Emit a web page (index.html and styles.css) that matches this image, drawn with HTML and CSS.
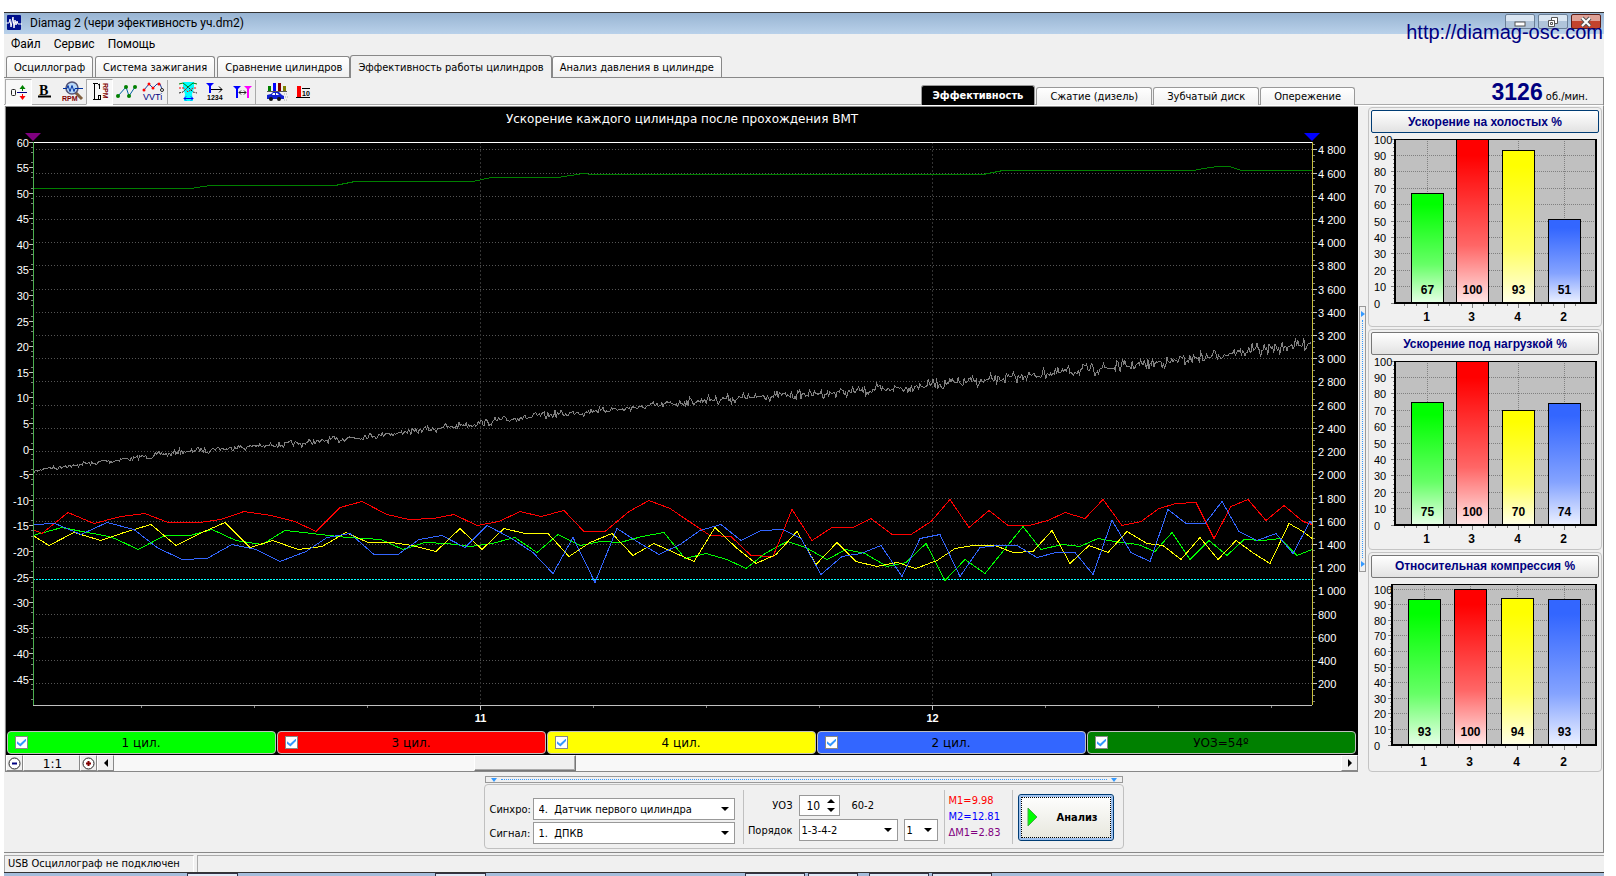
FILE: index.html
```html
<!DOCTYPE html>
<html lang="ru">
<head>
<meta charset="UTF-8">
<meta name="viewport" content="width=device-width, initial-scale=1.0">
<title>Diamag 2</title>
<link rel="stylesheet" href="styles.css">
</head>
<body>
<div class="window">

  <header class="titlebar">
    <svg class="app-icon" width="16" height="16" viewBox="0 0 16 16">
      <rect x="1" width="14" height="15" rx="1" fill="#00108c"/>
      <path d="M0 8h3l1-4 1 8 2-10 1 11 1-8 1 5 1-4 1 3h4" fill="none" stroke="#fff"/>
    </svg>
    <span class="title-text">Diamag 2 (чери эфективность уч.dm2)</span>
    <div class="window-buttons">
      <button type="button" class="win-btn" aria-label="Свернуть"><svg width="12" height="12"><rect x="1" y="6" width="10" height="4" fill="#fff" stroke="#555"/></svg></button>
      <button type="button" class="win-btn" aria-label="Развернуть"><svg width="12" height="12" fill="#fff" stroke="#555"><path d="M4.500 1.500h6v6h-6z"/><path d="M1.500 4.500h6v6h-6z"/><path d="M3.500 6.500h2v2h-2z"/></svg></button>
      <button type="button" class="win-btn win-close" aria-label="Закрыть"><svg width="12" height="12"><path d="M2 2l8 8M10 2l-8 8" stroke="#555" stroke-width="4"/><path d="M2 2l8 8M10 2l-8 8" stroke="#fff" stroke-width="2"/></svg></button>
    </div>
    <a class="site-link" href="http://diamag-osc.com">http://diamag-osc.com</a>
  </header>

  <nav class="menu">
    <button type="button">Файл</button>
    <button type="button">Сервис</button>
    <button type="button">Помощь</button>
  </nav>

  <div class="tabs">
    <button type="button" class="tab">Осциллограф</button>
    <button type="button" class="tab">Система зажигания</button>
    <button type="button" class="tab">Сравнение цилиндров</button>
    <button type="button" class="tab active">Эффективность работы цилиндров</button>
    <button type="button" class="tab">Анализ давления в цилиндре</button>
  </div>

  <div class="toolbar">
    <div class="tools">
      <button type="button" class="tool pressed" aria-label="Ноль">
        <svg viewBox="0 0 24 24"><rect x="4.500" y="9.500" width="4" height="6" rx="1" fill="none" stroke="#222"/><path d="M10 12.500h10" stroke="#000080"/><path d="M15.500 11V7" stroke="green"/><path d="M12.500 9l3-4 3 4z" fill="green"/><path d="M15.500 14v4" stroke="red"/><path d="M12.500 16l3 4 3-4z" fill="red"/></svg>
      </button>
      <button type="button" class="tool" aria-label="Жирный">
        <svg viewBox="0 0 24 24"><text x="5" y="15" class="ico-b">B</text><path d="M4 16.500h13" stroke="#000" stroke-width="2"/></svg>
      </button>
      <button type="button" class="tool" aria-label="Обороты">
        <svg viewBox="0 0 24 24"><path d="M14 12l7 7" stroke="#806040" stroke-width="3"/><circle cx="11" cy="8" r="6" fill="#b8d8f8" stroke="#557" stroke-width="1.500"/><path d="M2 8.500h4l1-3 2 6 2-6 2 6 1-3h8" fill="none" stroke="#0030a0"/><text x="1" y="21" class="ico-s" fill="#800000">RPM</text></svg>
      </button>
      <button type="button" class="tool pressed" aria-label="Шкала оборотов">
        <svg viewBox="0 0 24 24"><path d="M5 3.500h5M6.500 3v17M5 19.500h5" fill="none" stroke="#000"/><path d="M10 5l1.500-1v5" fill="none" stroke="#000"/><rect x="10.500" y="15.500" width="2" height="4" fill="none" stroke="#000"/><text class="ico-s" fill="#800000" transform="translate(14.500 3) rotate(90)">RPM</text></svg>
      </button>
      <button type="button" class="tool" aria-label="Точки">
        <svg viewBox="0 0 24 24"><path d="M3 16l8-9 3 9 6-9" fill="none" stroke="#0060a0"/><g fill="green"><circle cx="3" cy="16" r="2"/><circle cx="11" cy="7" r="2"/><circle cx="14" cy="16" r="2"/><circle cx="20" cy="7" r="2"/></g></svg>
      </button>
      <button type="button" class="tool" aria-label="VVTi">
        <svg viewBox="0 0 24 24"><path d="M2 10l5-6 4 4 4-4 3 0 2 5" fill="none" stroke="#2040a0"/><g fill="red"><circle cx="2" cy="10" r="1.500"/><circle cx="7" cy="4" r="1.500"/><circle cx="11" cy="8" r="1.500"/><circle cx="17" cy="4" r="1.500"/></g><circle cx="20" cy="10" r="1.500" fill="#fff" stroke="#222"/><text x="1" y="20" class="ico-m" fill="#000080">VVTi</text></svg>
      </button>
      <span class="tool-sep"></span>
      <button type="button" class="tool" aria-label="Окно анализа">
        <svg viewBox="0 0 24 24"><path d="M7 2h11v6l-2 6 1 7H8l1-7-2-6z" fill="#0ff"/><path d="M3 4l4-1 5 4 5-4 4 1" fill="none" stroke="green"/><path d="M3 13l4-1 5-5 5 5 4 1" fill="none" stroke="#222" stroke-dasharray="2 1"/><path d="M3 8l5 0 4 4 5-4h4" fill="none" stroke="red" stroke-dasharray="2 1"/><path d="M8 18.500h9M10 16.500l-2 2 2 2M15 16.500l2 2-2 2" fill="none" stroke="#00f"/></svg>
      </button>
      <button type="button" class="tool" aria-label="Порядок цилиндров">
        <svg viewBox="0 0 24 24"><path d="M3 3h8l-4 4z" fill="#00f"/><path d="M7 3v10" stroke="#00f" stroke-width="2"/><path d="M8 9.500h11M16 6.500l3 3-3 3" fill="none" stroke="#000"/><text x="4" y="20" class="ico-s" fill="#000">1234</text></svg>
      </button>
      <button type="button" class="tool" aria-label="Маркеры">
        <svg viewBox="0 0 24 24"><path d="M3 6h8l-4 4z" fill="#00f"/><path d="M7 7v11" stroke="#00f" stroke-width="2"/><path d="M14 6h8l-4 4z" fill="#f0f"/><path d="M18 7v11" stroke="#f0f" stroke-width="2"/><path d="M9 12.500h7M11 10.500l-2 2 2 2M14 10.500l2 2-2 2" fill="none" stroke="#222"/></svg>
      </button>
      <span class="tool-sep"></span>
      <button type="button" class="tool" aria-label="Отчёт">
        <svg viewBox="0 0 24 24"><path d="M4 6h3v5H4z" fill="green"/><path d="M9 3h3v8H9z" fill="#00f"/><path d="M14 3h3v8h-3z" fill="#800000"/><path d="M19 6h3v5h-3z" fill="olive"/><path d="M3 11.500h20" stroke="#555"/><path d="M3 19v-4l4-1 2-2h6l3 3 2 1v3z" fill="#1020d0"/><path d="M9 13h2v2H8zM12 13h1l2 2h-3z" fill="#fff"/><circle cx="7" cy="19" r="2" fill="#111"/><circle cx="15" cy="19" r="2" fill="#111"/><path d="M20 14h4M21 17h3M20 20h4" stroke="#aaa" stroke-dasharray="1 1"/></svg>
      </button>
      <button type="button" class="tool" aria-label="Порог">
        <svg viewBox="0 0 24 24"><path d="M6 6h4v11H6z" fill="red"/><path d="M5 17.500h14M11 8.500h8" stroke="#000"/><text x="11" y="16" class="ico-s" fill="#000">10</text></svg>
      </button>
    </div>
    <div class="modes">
      <button type="button" class="mode active">Эффективность</button>
      <button type="button" class="mode">Сжатие (дизель)</button>
      <button type="button" class="mode">Зубчатый диск</button>
      <button type="button" class="mode">Опережение</button>
    </div>
    <div class="rpm"><b>3126</b> <span>об./мин.</span></div>
  </div>

  <main class="work">
    <section class="scope">
      <h1>Ускорение каждого цилиндра после прохождения ВМТ</h1>
      <div class="plot"><svg id="trend"></svg></div>
      <div class="legend">
        <label class="c-green"><input type="checkbox" checked><span>1 цил.</span></label>
        <label class="c-red"><input type="checkbox" checked><span>3 цил.</span></label>
        <label class="c-yellow"><input type="checkbox" checked><span>4 цил.</span></label>
        <label class="c-blue"><input type="checkbox" checked><span>2 цил.</span></label>
        <label class="c-dark"><input type="checkbox" checked><span>УОЗ=54º</span></label>
      </div>
      <div class="scroller">
        <button type="button" class="zoom-btn" aria-label="Уменьшить"><svg width="13" height="13"><circle cx="6.500" cy="6.500" r="5.500" fill="#fff" stroke="#222"/><path d="M4 6.500h5" stroke="#000080" stroke-width="2"/></svg></button>
        <button type="button" class="scale-btn">1:1</button>
        <button type="button" class="zoom-btn" aria-label="Увеличить"><svg width="13" height="13"><circle cx="6.500" cy="6.500" r="5.500" fill="#fff" stroke="#222"/><path d="M4 6.500h5M6.500 4v5" stroke="#800000" stroke-width="2"/></svg></button>
        <button type="button" class="arrow-btn" aria-label="Влево"><svg width="6" height="8"><path d="M5 0v8L1 4z"/></svg></button>
        <div class="track"><div class="thumb"></div></div>
        <button type="button" class="arrow-btn" aria-label="Вправо"><svg width="6" height="8"><path d="M1 0v8l4-4z"/></svg></button>
      </div>
    </section>

    <div class="v-splitter"><i></i><b></b><i></i></div>

    <aside class="side">
      <section class="card">
        <button type="button" class="card-title focused">Ускорение на холостых %</button>
        <div class="bars"><svg id="bars-idle"></svg></div>
      </section>
      <section class="card">
        <button type="button" class="card-title">Ускорение под нагрузкой %</button>
        <div class="bars"><svg id="bars-load"></svg></div>
      </section>
      <section class="card">
        <button type="button" class="card-title">Относительная компрессия %</button>
        <div class="bars"><svg id="bars-compression"></svg></div>
      </section>
    </aside>
  </main>

  <section class="controls">
    <div class="h-splitter"><i></i><b></b><i></i></div>
    <form class="panel">
      <div class="source">
        <label for="sync">Синхро:</label>
        <span class="combo"><select id="sync"><option>4.&nbsp; Датчик первого цилиндра</option></select></span>
        <label for="signal">Сигнал:</label>
        <span class="combo"><select id="signal"><option>1.&nbsp; ДПКВ</option></select></span>
      </div>
      <div class="order">
        <div class="order-row">
          <label for="uoz">УОЗ</label>
          <span class="spin"><input id="uoz" type="text" value="10"></span>
          <span class="teeth">60-2</span>
        </div>
        <div class="order-row">
          <label for="seq">Порядок</label>
          <span class="combo combo-seq"><select id="seq"><option>1-3-4-2</option></select></span>
          <span class="combo combo-num"><select id="num" aria-label="Номер цилиндра"><option>1</option></select></span>
        </div>
      </div>
      <div class="marks">
        <span class="m1">M1=9.98</span>
        <span class="m2">M2=12.81</span>
        <span class="dm">ΔM1=2.83</span>
      </div>
      <div class="run">
        <button type="button" class="analyze"><svg width="12" height="20"><path d="M1 1v18l9-9z" fill="#0f0" stroke="#4a4"/></svg><span>Анализ</span></button>
      </div>
    </form>
  </section>

  <footer class="status">
    <div class="status-cell">USB Осциллограф не подключен</div>
    <div class="status-rest"></div>
  </footer>
  <div class="taskbar">
    <span class="task first"></span><span class="task second"></span><span class="task third"></span>
    <span class="task wide"></span><span class="task fourth"></span><span class="task"></span>
  </div>
</div>
<script src="script.js"></script>
</body>
</html>
```

FILE: styles.css
```css
* {
    box-sizing: border-box;
}
body {
    margin: 0;
    padding: 12px 12px 0 4px;
    min-height: 100vh;
    display: flex;
    background: #fff;
    color: #000;
    font-family: "DejaVu Sans Condensed", "Liberation Sans", sans-serif;
    font-size: 11px;
}
button, select, input {
    font: inherit;
    color: inherit;
    margin: 0;
}
button {
    padding: 0;
    border: 0;
    background: none;
}
svg {
    display: block;
}
.window {
    flex: 1;
    min-width: 0;
    display: flex;
    flex-direction: column;
    background: #f0f0f0;
}

/* title bar and menu */
.titlebar {
    position: relative;
    height: 22px;
    display: flex;
    align-items: center;
    gap: 8px;
    padding: 0 3px 0 2px;
    border-top: 1px solid #333;
    background: linear-gradient(#98b4d2, #b9d1ea);
}
.app-icon {
    margin-bottom: 2px;
}
.title-text, .menu {
    font-family: Roboto, sans-serif;
    font-size: 12px;
}
.title-text {
    margin-bottom: 2px;
}
.window-buttons {
    margin-left: auto;
    align-self: flex-start;
    display: flex;
    gap: 3px;
    padding-top: 1px;
}
.win-btn {
    width: 30px;
    height: 15px;
    display: flex;
    align-items: center;
    justify-content: center;
    border: 1px solid #6b7f96;
    border-radius: 2px;
    background: linear-gradient(#dbe6f2 50%, #b0c4da 50%);
}
.win-close {
    border-color: #5c1d16;
    background: linear-gradient(#e0a196 50%, #c3432c 50%);
}
.site-link {
    position: absolute;
    right: 1px;
    top: 8px;
    font-family: "Liberation Sans", Arial, sans-serif;
    font-size: 20px;
    line-height: 22px;
    color: #000080;
    text-decoration: none;
}
.menu {
    height: 21px;
    display: flex;
    align-items: center;
    gap: 13px;
    padding: 0 0 1px 7px;
}

/* page tabs */
.tabs {
    height: 23px;
    display: flex;
    align-items: flex-end;
    padding-left: 2px;
    border-bottom: 1px solid #888;
}
.tab {
    height: 21px;
    padding: 0 7px;
    margin-right: 2px;
    border: 1px solid #888;
    border-bottom: 0;
    border-radius: 3px 3px 0 0;
    background: linear-gradient(#fff, #f0f0f0);
    white-space: nowrap;
}
.tab.active {
    height: 23px;
    margin: 0 0 -1px -2px;
    background: #f0f0f0;
}

/* toolbar */
.toolbar {
    height: 28px;
    display: flex;
    align-items: flex-end;
    border-right: 1px solid #888;
    border-bottom: 1px solid #fff;
    box-shadow: inset 0 -1px #aaa;
}
.tools {
    display: flex;
    align-items: center;
    padding-left: 1px;
}
.tool {
    width: 27px;
    height: 26px;
    display: flex;
    align-items: center;
    justify-content: center;
}
.tool svg {
    width: 24px;
    height: 24px;
}
.pressed {
    border: 1px solid;
    border-color: #aaa #fff #fff #aaa;
    background: #f8f8f8;
}
.tool-sep {
    width: 7px;
    height: 24px;
    border-left: 1px solid #aaa;
}
.ico-b {
    font: bold 14px "Liberation Serif", serif;
}
.ico-s {
    font: bold 7px "Liberation Sans", sans-serif;
}
.ico-m {
    font: 9px "Liberation Sans", sans-serif;
}
.modes {
    margin-left: auto;
    display: flex;
    align-items: flex-end;
    gap: 1px;
}
.mode {
    height: 18px;
    padding: 0 13px;
    border: 1px solid #999;
    border-bottom: 0;
    border-radius: 3px 3px 0 0;
    background: linear-gradient(#fff, #f0f0f0);
    white-space: nowrap;
}
.mode.active {
    height: 20px;
    padding: 0 11px;
    background: #000;
    color: #fff;
    font-weight: bold;
}
.rpm {
    width: 248px;
    height: 25px;
    padding-right: 15px;
    text-align: right;
    line-height: 24px;
}
.rpm b {
    font-family: "Liberation Sans", Arial, sans-serif;
    font-size: 23px;
    color: #000080;
}

/* chart and side column */
.work {
    flex: 1;
    display: flex;
    border-right: 1px solid #888;
}
.scope {
    flex: 1;
    min-width: 0;
    display: flex;
    flex-direction: column;
    margin-left: 1px;
    border: solid #888;
    border-width: 1px 0 1px 1px;
    background: #000;
}
.scope h1 {
    margin: 0;
    padding-top: 4px;
    height: 22px;
    font: 12px/16px "DejaVu Sans", Verdana, sans-serif;
    color: #fff;
    text-align: center;
}
.plot {
    position: relative;
    flex: 1;
    min-height: 300px;
}
.plot svg, .bars svg {
    position: absolute;
    left: 0;
    top: 0;
    width: 100%;
    height: 100%;
}
.plot text, .bars text {
    font: 11px "Liberation Sans", Arial, sans-serif;
}
.plot text {
    fill: #fff;
}
.plot .time {
    font-weight: bold;
}
.grid {
    stroke: #555;
    stroke-dasharray: 1 2;
}
.grid-time {
    stroke: #333;
    stroke-dasharray: 2 2;
}
.trace {
    fill: none;
    stroke-width: 1;
    shape-rendering: crispEdges;
}
.legend {
    display: flex;
    gap: 1px;
    padding: 0 2px 1px 1px;
}
.legend label {
    position: relative;
    flex: 1;
    height: 23px;
    display: flex;
    align-items: center;
    padding-left: 7px;
    border: 1px solid #c0c0c0;
    border-radius: 4px;
    font: 12px "DejaVu Sans", Verdana, sans-serif;
}
.legend span {
    flex: 1;
    text-align: center;
    padding-right: 21px;
}
.legend input {
    appearance: none;
    width: 13px;
    height: 13px;
    display: flex;
    align-items: center;
    justify-content: center;
    border: 1px solid #888;
    background: #fff;
}
.legend input:checked::before {
    content: "";
    width: 9px;
    height: 8px;
    background: #3399ff;
    clip-path: polygon(0 35%, 35% 65%, 100% 0, 100% 30%, 38% 100%, 0 65%);
}
.c-green { background: #0f0; }
.c-red { background: #f00; }
.c-yellow { background: #ff0; }
.c-blue { background: #36f; }
.c-dark { background: #008000; }
.scroller {
    display: flex;
    height: 16px;
    background: #f0f0f0;
}
.scroller button {
    display: flex;
    align-items: center;
    justify-content: center;
    border: 1px solid;
    border-color: #fff #888 #888 #fff;
    background: #f0f0f0;
}
.scroller .zoom-btn, .scroller .arrow-btn {
    width: 17px;
}
.scroller .scale-btn {
    width: 57px;
    padding: 2px 0 0 2px;
    font: 12px "DejaVu Sans", Verdana, sans-serif;
}
.track {
    flex: 1;
    background: #f8f8f8;
}
.thumb {
    width: 102px;
    height: 16px;
    margin-left: 29.300%;
    border: 1px solid;
    border-color: #fff #777 #777 #fff;
    box-shadow: inset -1px -1px #aaa;
    background: #f0f0f0;
}
.v-splitter {
    width: 7px;
    height: 266px;
    margin: 200px 2px 0 1px;
    border: 1px solid #999;
    display: flex;
    flex-direction: column;
    align-items: center;
    gap: 3px;
    padding: 4px 0;
}
.v-splitter b {
    flex: 1;
    border-left: 1px dotted #3399ff;
}
.v-splitter i {
    border: solid transparent;
    border-width: 3px 0 3px 4px;
    border-left-color: #3399ff;
}
.side {
    width: 234px;
    margin-right: 1px;
    padding-top: 1px;
    display: flex;
    flex-direction: column;
    gap: 2px;
}
.card {
    flex: 1;
    display: flex;
    flex-direction: column;
    padding: 2px;
    border: 1px solid #c4c4c4;
    border-radius: 4px;
}
.card-title {
    height: 23px;
    border: 1px solid #777;
    border-radius: 2px;
    background: linear-gradient(#fff, #e2e2e2);
    font: bold 12px "Liberation Sans", Arial, sans-serif;
    color: #000080;
}
.card-title.focused {
    border-color: #003c74;
}
.bars {
    position: relative;
    flex: 1;
}
.bars .bold {
    font-weight: bold;
    font-size: 12px;
}
.bar-grid {
    stroke: #808080;
    stroke-dasharray: 1 1;
}

/* bottom controls */
.controls {
    height: 81px;
    display: flex;
    flex-direction: column;
    align-items: center;
    padding: 4px 0 0 0;
    border-right: 1px solid #888;
    border-bottom: 1px solid #888;
}
.h-splitter {
    width: 638px;
    height: 7px;
    border: 1px solid #999;
    display: flex;
    align-items: center;
    gap: 4px;
    padding: 0 5px;
}
.h-splitter b {
    flex: 1;
    border-top: 1px dotted #3399ff;
}
.h-splitter i {
    border: solid transparent;
    border-width: 4px 3px 0;
    border-top-color: #3399ff;
}
.panel {
    width: 640px;
    height: 65px;
    margin-top: 1px;
    display: flex;
    border: 1px solid #c0c0c0;
    border-radius: 4px;
    padding: 5px 8px 4px 5px;
}
.source {
    display: grid;
    grid-template-columns: 43px 202px;
    row-gap: 2px;
    align-content: end;
    align-items: center;
    padding-right: 8px;
    border-right: 1px solid #c0c0c0;
}
.combo {
    position: relative;
    display: block;
    height: 22px;
}
.combo select {
    appearance: none;
    width: 100%;
    height: 100%;
    padding: 0 5px;
    border: 1px solid #999;
    border-radius: 0;
    background: #fff;
}
.combo::after {
    content: "";
    position: absolute;
    right: 6px;
    top: 9px;
    border: solid transparent;
    border-width: 4px 4px 0;
    border-top-color: #000;
}
.order {
    width: 201px;
    display: flex;
    flex-direction: column;
    justify-content: flex-end;
    gap: 3px;
    padding-bottom: 3px;
    border-right: 1px solid #c0c0c0;
}
.order-row {
    display: flex;
    align-items: center;
    gap: 6px;
}
.order-row label {
    width: 49px;
    text-align: right;
}
.combo-seq {
    width: 99px;
}
.combo-num {
    width: 34px;
}
.combo-seq select, .combo-num select {
    padding: 0 2px;
}
.spin {
    position: relative;
}
.spin input {
    display: block;
    width: 41px;
    height: 21px;
    padding: 0 0 0 7px;
    border: 1px solid #999;
    background: #fff;
    font-size: 12px;
}
.spin::before, .spin::after {
    content: "";
    position: absolute;
    right: 5px;
    border: solid transparent;
}
.spin::before {
    top: 4px;
    border-width: 0 4px 4px;
    border-bottom-color: #000;
}
.spin::after {
    bottom: 4px;
    border-width: 4px 4px 0;
    border-top-color: #000;
}
.teeth {
    padding-left: 6px;
}
.marks {
    width: 68px;
    display: flex;
    flex-direction: column;
    justify-content: center;
    padding-left: 4px;
    line-height: 16px;
    border-right: 1px solid #c0c0c0;
}
.m1 { color: #f00; }
.m2 { color: #00f; }
.dm { color: #800080; }
.run {
    flex: 1;
    display: flex;
    padding-left: 5px;
    align-items: center;
}
.analyze {
    width: 96px;
    height: 47px;
    display: flex;
    align-items: center;
    gap: 18px;
    padding-left: 8px;
    border: 1px solid #003c74;
    border-radius: 3px;
    box-shadow: inset 0 0 0 2px #9dc0ee;
    outline: 1px dotted #000;
    outline-offset: -4px;
    background: linear-gradient(#fff, #e6e6dc);
    font-weight: bold;
}

/* status line */
.status {
    display: flex;
    gap: 3px;
    padding-top: 2px;
    height: 19px;
}
.status-cell, .status-rest {
    border: solid #aaa;
    border-width: 1px 0 0 1px;
}
.status-cell {
    width: 190px;
    padding: 0 3px;
    line-height: 16px;
    border-right: 1px solid #fff;
    white-space: nowrap;
}
.status-rest {
    flex: 1;
}
.taskbar {
    height: 4px;
    display: flex;
    gap: 3px;
    border-top: 1px solid #333;
    background: #a4bddb;
}
.task {
    width: 60px;
    border: solid #334;
    border-width: 1px 1px 0;
    background: #dfe9f5;
}
.task.first { width: 51px; margin-left: 183px; }
.task.second { width: 51px; margin-left: 194px; }
.task.third { margin-left: 256px; }
.task.wide { width: 50px; }
.task.fourth { margin-left: 8px; }
```

FILE: script.js
```js
var NS = 'http://www.w3.org/2000/svg';

// Кривые: пары x,y в единицах поля 1279 x 563
var FIELD_W = 1279, FIELD_H = 563;
var traces = [
  { color: '#008000', pts: [0,46,158,46,177,43,302,43,322,39,440,39,458,35,525,35,550,31,560,32,950,32,970,28,1160,28,1171,26,1184,24,1196,24,1209,28,1279,28] },
  { color: '#00ff00', pts: [0,393,29,385,49,389,71,393,82,396,105,407,132,393,157,393,179,387,203,398,229,402,252,388,279,391,314,395,348,397,370,407,392,400,414,401,438,404,459,401,482,395,504,410,525,392,547,403,568,399,587,400,609,394,631,390,652,416,673,411,694,417,713,426,732,411,754,399,773,405,794,417,813,407,832,411,854,424,873,420,893,401,912,438,932,417,952,431,990,384,1008,407,1029,402,1047,404,1065,396,1087,400,1105,402,1122,409,1139,390,1157,417,1176,398,1194,413,1211,397,1230,398,1247,396,1264,413,1279,407] },
  { color: '#ff0000', pts: [0,387,9,391,35,370,61,381,88,374,112,371,135,380,166,380,188,377,211,369,238,373,262,379,283,389,307,365,329,359,354,372,376,377,401,376,421,372,444,383,466,379,487,369,508,374,531,368,551,389,572,389,596,369,616,358,637,366,677,393,698,394,718,413,740,414,759,367,779,398,799,385,820,385,838,376,859,392,878,392,898,379,917,357,936,385,956,368,975,383,996,383,1015,378,1032,370,1052,376,1070,357,1089,383,1108,379,1126,366,1143,361,1163,360,1181,396,1198,364,1215,357,1233,378,1251,363,1270,379,1279,382] },
  { color: '#ffff00', pts: [0,393,16,403,41,390,68,398,91,390,118,382,143,403,169,390,192,380,217,405,240,398,265,407,289,404,313,390,335,400,359,400,379,403,403,409,427,386,449,407,471,386,492,391,515,391,536,414,557,400,579,391,600,413,621,401,661,419,682,385,703,405,723,421,743,412,764,389,783,422,804,400,823,419,844,424,864,420,883,426,904,418,922,406,940,403,962,403,980,410,1000,409,1019,388,1037,421,1056,403,1075,410,1094,389,1114,401,1130,403,1148,417,1167,395,1185,417,1203,398,1221,411,1237,421,1256,381,1270,389,1279,396] },
  { color: '#3366ff', pts: [0,382,22,381,48,392,74,380,101,387,124,405,149,417,174,416,199,402,223,407,247,419,273,409,294,395,317,391,341,412,365,412,386,397,409,393,432,405,454,383,477,395,500,410,520,431,540,395,562,440,584,386,604,399,626,412,647,402,667,388,688,382,708,398,728,388,750,387,768,396,788,432,809,414,828,411,848,403,869,434,887,396,907,392,927,434,947,405,966,403,984,403,1004,415,1023,410,1042,410,1060,432,1079,378,1098,410,1117,419,1135,367,1153,381,1172,381,1189,359,1206,389,1224,398,1243,391,1260,411,1277,379,1279,381] }
];
// Обороты двигателя, опорные точки
var rpm = [0,328,39,323,106,315,152,309,204,305,266,301,322,295,379,289,420,284,482,276,544,270,606,265,668,258,730,254,791,251,853,247,900,242,956,238,998,233,1059,227,1121,221,1162,216,1204,210,1245,205,1279,201];

function el(parent, name, attrs, text) {
  var e = document.createElementNS(NS, name);
  for (var k in attrs) e.setAttribute(k, attrs[k]);
  if (text !== undefined) e.textContent = text;
  parent.appendChild(e);
  return e;
}

function line(svg, x1, y1, x2, y2, attrs) {
  var a = { x1: x1, y1: y1, x2: x2, y2: y2 };
  for (var k in attrs) a[k] = attrs[k];
  return el(svg, 'line', a);
}

function half(v) {
  return Math.floor(v) + 0.5;
}

// Шум оборотов поверх опорных точек
function noisyRpm() {
  var out = [], seed = 7, i = 0;
  for (var x = 0; x <= FIELD_W; x += 1.2) {
    while (i < rpm.length - 4 && x > rpm[i + 2]) i += 2;
    var t = (x - rpm[i]) / (rpm[i + 2] - rpm[i]);
    var y = rpm[i + 1] + t * (rpm[i + 3] - rpm[i + 1]);
    seed = (seed * 16807) % 2147483647;
    var r = seed / 2147483647 - 0.5;
    out.push(x, y + r * r * r * (10 + x / 30) + r * 2 + Math.sin(x / 3) * 0.8);
  }
  return out;
}

function drawTrend() {
  var svg = document.getElementById('trend');
  svg.textContent = '';
  var w = svg.parentNode.clientWidth, h = svg.parentNode.clientHeight;
  var L = 27, R = w - 46, T = 13, B = h - 26;
  var sx = (R - L) / FIELD_W, sy = (B - T) / FIELD_H;
  var i, y, x;

  // правая шкала и сетка
  for (i = 50; i <= 4850; i += 50) {
    y = half(B + 2 - i * (B - T) / 4850);
    if (i % 200 === 0) {
      line(svg, L, y, R, y, { 'class': 'grid' });
      line(svg, R, y, R + 5, y, { stroke: '#c0c0c0' });
      el(svg, 'text', { x: R + 6, y: y + 4 }, i < 1000 ? i : Math.floor(i / 1000) + ' ' + ('00' + i % 1000).slice(-3));
    } else {
      line(svg, R, y, R + 3, y, { stroke: '#808080' });
    }
  }
  // левая шкала
  for (i = 60; i > -50; i--) {
    y = half(T + (60 - i) * (B - T) / 110);
    if (i % 5 === 0) {
      line(svg, L - 4, y, L, y, { stroke: '#c0c0c0' });
      el(svg, 'text', { x: L - 4, y: y + 4, 'text-anchor': 'end' }, i);
    } else if (i % 5 !== 2 && i % 5 !== -3) {
      line(svg, L - 2, y, L, y, { stroke: '#808080' });
    }
  }
  // время
  for (i = 0; i < 11; i++) {
    x = half(L + (108 + i * 113) * sx);
    line(svg, x, B, x, B + 3, { stroke: '#808080' });
    if (i === 3 || i === 7) {
      line(svg, x, T, x, B, { 'class': 'grid-time' });
      line(svg, x, B, x, B + 5, { stroke: '#c0c0c0' });
      el(svg, 'text', { x: x, y: B + 17, 'text-anchor': 'middle', 'class': 'time' }, i === 3 ? 11 : 12);
    }
  }

  line(svg, L, half(T + 437 * sy), R, half(T + 437 * sy), { stroke: '#00ffff', 'stroke-dasharray': '2 1' });
  traces.concat([{ color: '#808080', pts: noisyRpm() }]).forEach(function (t) {
    var s = '';
    for (var j = 0; j < t.pts.length; j += 2) {
      s += (L + t.pts[j] * sx).toFixed(1) + ',' + (T + 0.5 + t.pts[j + 1] * sy).toFixed(1) + ' ';
    }
    el(svg, 'polyline', { points: s, 'class': 'trace', stroke: t.color });
  });

  line(svg, L, half(T), R, half(T), { stroke: '#fff' });
  line(svg, L, half(B), R, half(B), { stroke: '#c0c0c0' });
  line(svg, half(L), T, half(L), B, { stroke: '#4caf50' });
  line(svg, half(R), T, half(R), B, { stroke: '#c8c03c' });
  el(svg, 'path', { d: 'M' + (L - 8) + ' ' + (T - 9) + 'h16l-8 8z', fill: '#800080' });
  el(svg, 'path', { d: 'M' + (R - 8) + ' ' + (T - 9) + 'h16l-8 8z', fill: '#0000ff' });
}

var barColors = ['#00ff00', '#ff0000', '#ffff00', '#3366ff'];
var cylinders = [1, 3, 4, 2];

function drawBars(id, values, left, headroom, foot) {
  var svg = document.getElementById(id);
  svg.textContent = '';
  var w = svg.parentNode.clientWidth, h = svg.parentNode.clientHeight;
  var T = 6, B = h - foot, R = w - 2, top = T + headroom, i, y;
  var defs = el(svg, 'defs', {});
  el(svg, 'rect', { x: left, y: T, width: R - left, height: B - T, fill: '#c0c0c0' });

  for (i = 0; i <= 100; i += 2.5) {
    y = half(B - i * (B - top) / 100);
    if (i % 10 === 0) {
      line(svg, left, y, R, y, { 'class': 'bar-grid' });
      line(svg, left - 4, y, left, y, { stroke: '#808080' });
      el(svg, 'text', { x: 3, y: y + 4 }, i);
    } else {
      line(svg, left - 2, y, left, y, { stroke: '#808080' });
    }
  }
  var step = (R - 32.5 - (left + 32.5)) / 3;
  for (i = 0; i < 4; i++) {
    line(svg, half(left + 32 + i * step), T, half(left + 32 + i * step), B, { 'class': 'bar-grid' });
  }
  line(svg, left, T + 0.5, R, T + 0.5, { stroke: '#000' });
  el(svg, 'path', { d: 'M' + left + ' ' + T + 'V' + B + 'H' + (R - 1) + 'V' + T, fill: 'none', stroke: '#000', 'stroke-width': 2 });

  for (i = 0; i < 4; i++) {
    var cx = half(left + 32 + i * step);
    var bt = half(B - values[i] * (B - top) / 100);
    var g = el(defs, 'linearGradient', { id: id + i, x1: 0, y1: 0, x2: 0, y2: 1 });
    el(g, 'stop', { offset: '10%', 'stop-color': barColors[i] });
    el(g, 'stop', { offset: '65%', 'stop-color': barColors[i], 'stop-opacity': 0.6 });
    el(g, 'stop', { offset: '100%', 'stop-color': barColors[i], 'stop-opacity': 0.1 });
    el(svg, 'rect', { x: cx - 16, y: bt, width: 32, height: B - bt - 0.5, fill: '#fff' });
    el(svg, 'rect', { x: cx - 16, y: bt, width: 32, height: B - bt - 0.5, fill: 'url(#' + id + i + ')', stroke: '#000' });
    el(svg, 'text', { x: cx, y: B - 9, 'text-anchor': 'middle', 'class': 'bold' }, values[i]);
    el(svg, 'text', { x: cx - 1, y: h - 3, 'text-anchor': 'middle', 'class': 'bold' }, cylinders[i]);
    for (var k = -2; k <= 1; k++) {
      line(svg, half(cx + k * step / 4), B + 1, half(cx + k * step / 4), B + (k === 0 ? 5 : 3), { stroke: '#808080' });
    }
  }
}

function draw() {
  drawTrend();
  drawBars('bars-idle', [67, 100, 93, 51], 24, 0, 21);
  drawBars('bars-load', [75, 100, 70, 74], 24, 0, 21);
  drawBars('bars-compression', [93, 100, 94, 93], 21, 5, 24);
}

window.addEventListener('resize', draw);
draw();
```
